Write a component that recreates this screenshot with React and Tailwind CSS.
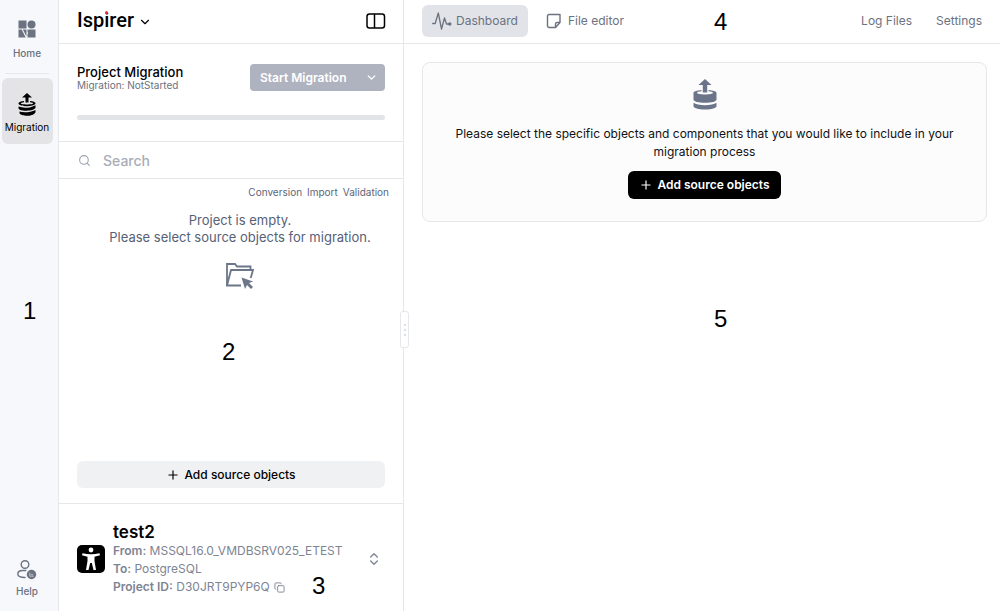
import { useState } from "react";
import { ChevronDown, ChevronsUpDown, Copy, Plus, Search } from "lucide-react";

const treeColumns = ["Conversion", "Import", "Validation"];

function HomeIcon() {
  return (
    <svg viewBox="0 0 18 18" className="w-[18px] h-[18px]" fill="currentColor" aria-hidden="true">
      <rect x="0.5" y="0.5" width="8" height="8" />
      <circle cx="13.5" cy="4.5" r="4" />
      <path d="M0.500 9.500h3.200l4 8H.500z M4.800 9.500h3.700v7z" />
      <path d="M9.500 9.500h8v8h-8v-3.200a2 2 0 0 0 0-2.600z" />
    </svg>
  );
}

function MigrationIcon({ className }) {
  return (
    <svg viewBox="0 0 24 32" className={className} fill="currentColor" aria-hidden="true">
      <path d="M12 1l6.500 6h-4.300v7.500H9.800V7H5.500z" />
      <path d="M8.500 12v1.300c-2.500.3-4.500.8-4.500 1.500 0 1.100 4 1.700 8 1.700s8-.6 8-1.700c0-.7-2-1.200-4.500-1.500V12c4.500.4 8 1.400 8 2.800v6.700c0 2-5 3.300-11.500 3.300S.500 23.500.500 21.500v-6.700C.500 13.400 4 12.400 8.500 12z" />
      <path d="M.500 24.800c2 1.500 6.300 2.400 11.500 2.400s9.500-.9 11.500-2.400V28c0 2-5 3.500-11.500 3.500S.500 30 .500 28z" />
    </svg>
  );
}

function StackIcon() {
  return (
    <svg viewBox="0 0 18 23" className="w-[18px] h-[23px]" fill="currentColor" aria-hidden="true">
      <path d="M9 0l5 4.500h-3.500v5h-3v-5H4z" />
      <path d="M6 8v1.200c-2 .2-3.200.5-3.200 1 0 .8 3 1.200 6.200 1.200s6.200-.4 6.200-1.200c0-.5-1.200-.8-3.200-1V8c3 .2 5.500 1 5.500 2.200v.6c-1 1.600-4.500 2.400-8.500 2.400S1 12.300.500 10.700v-.5C.500 9 3 8.200 6 8z" />
      <path d="M.500 13.600c5 1.900 12 1.400 17-1.400v2.600c-1 2-5 2.900-8.500 2.900-4 0-8-.6-8.500-2.500z" />
      <path d="M1.500 18.600c4 1.300 11 .9 16-1.600v2.200c-1 2.500-5 3.600-8.500 3.600-3.500 0-7-1-7.500-2.800z" />
    </svg>
  );
}

function HelpIcon() {
  return (
    <svg viewBox="0 0 20 20" className="w-5 h-5" fill="none" stroke="currentColor" strokeWidth="1.400" strokeLinecap="round" aria-hidden="true">
      <circle cx="8" cy="4.500" r="3.800" />
      <path d="M8 17.500C3.500 17.500.800 16.500.800 14s2-3.500 5-3.500h3" />
      <circle cx="14.500" cy="14.500" r="4.700" fill="currentColor" stroke="none" />
      <path d="M12.800 13v3.200h3.600M14.300 14.300l1.500.500" stroke="#f7f8fb" strokeWidth="0.600" />
    </svg>
  );
}

function PanelIcon() {
  return (
    <svg viewBox="0 0 20 16" className="w-5 h-4" fill="none" stroke="currentColor" strokeWidth="1.500" aria-hidden="true">
      <rect x="1" y="1" width="17.500" height="14" rx="2.500" />
      <path d="M8.500 1v14" />
    </svg>
  );
}

function FolderIcon() {
  return (
    <svg viewBox="0 0 28 28" className="w-7 h-7" fill="none" stroke="currentColor" strokeWidth="1.800" aria-hidden="true">
      <path d="M1 23.500V2h8l2 2.500h13.500V7.500" />
      <path d="M15 23.500H1L5 8h22l-2.300 8" />
      <path d="M15.500 15.500l11.500 4-4 1.500 4 4-2 2-4-4-2 4z" fill="currentColor" stroke="none" />
    </svg>
  );
}

function PulseIcon() {
  return (
    <svg viewBox="0 0 20 18" className="w-5 h-[18px]" fill="none" stroke="currentColor" strokeWidth="1.300" strokeLinejoin="round" strokeLinecap="round" aria-hidden="true">
      <path d="M.700 11.500h2.500L6.300 1l3.200 16 3-11 2 6h3" />
      <circle cx="17.800" cy="12" r="1.700" fill="currentColor" stroke="none" />
    </svg>
  );
}

function NoteIcon() {
  return (
    <svg viewBox="0 0 16 16" className="w-4 h-4" fill="none" stroke="currentColor" strokeWidth="1.400" strokeLinejoin="round" aria-hidden="true">
      <path d="M3 1.500h11v8L9.500 14.500H3a1.500 1.500 0 0 1-1.500-1.500V3A1.500 1.500 0 0 1 3 1.500z" />
      <path d="M14 9.500h-3A1.500 1.500 0 0 0 9.500 11v3.500" />
    </svg>
  );
}

function ProjectIcon() {
  return (
    <svg viewBox="0 0 28 28" className="w-7 h-7 shrink-0" aria-hidden="true">
      <rect width="28" height="28" rx="5" fill="#000" />
      <circle cx="14" cy="5" r="2.400" fill="#fff" />
      <path d="M5.500 8.200Q14 10.500 22.500 8.200l.5 2-5.500 1.600v4.200l1.500 9h-2.500L14.800 18h-1.600l-1.700 7H9l1.500-9v-4.200L5 10.200z" fill="#fff" />
    </svg>
  );
}

function Marker({ className, children }) {
  return (
    <span className={`absolute font-['Liberation_Sans',sans-serif] text-2xl leading-7 font-normal text-black ${className}`}>
      {children}
    </span>
  );
}

function Sidebar() {
  return (
    <nav className="relative w-[59px] shrink-0 flex flex-col items-center border-r border-[#e5e7eb] bg-[#f7f8fb] text-[10px] text-[#6b7280]">
      <a href="#home" className="flex flex-col items-center gap-2 pt-5 mr-1 font-medium">
        <HomeIcon />
        <span>Home</span>
      </a>
      <hr className="w-11 mr-1 mt-3 mb-1 border-[#e5e7eb]" />
      <a href="#migration" className="flex flex-col items-center gap-1 w-[51px] h-[66px] pt-[15px] mr-1 rounded-md bg-[#e4e4e6] text-black">
        <StackIcon />
        <span>Migration</span>
      </a>
      <a href="#help" className="flex flex-col items-center gap-1 mt-auto mb-3 mr-1 font-medium">
        <HelpIcon />
        <span>Help</span>
      </a>
      <Marker className="left-[23px] top-[297px]">1</Marker>
    </nav>
  );
}

function ProjectPanel() {
  const [query, setQuery] = useState("");

  return (
    <aside className="relative w-[345px] shrink-0 flex flex-col border-r border-[#e5e7eb]">
      <header className="h-11 flex items-center justify-between pl-[18px] pr-[17px] border-b border-[#e5e7eb]">
        <button className="flex items-center gap-1">
          <span className="font-['Roboto',sans-serif] text-xl leading-6 font-medium pb-1">
            Isp
            <span className="relative">
              i
              <span className="absolute left-px top-[3px] w-[3px] h-[3px] rounded-full bg-red-500" />
            </span>
            rer
          </span>
          <ChevronDown size={14} />
        </button>
        <button aria-label="Toggle panel" className="pb-[2px]">
          <PanelIcon />
        </button>
      </header>

      {/* Migration status */}
      <section className="h-[98px] px-[18px] pt-5 border-b border-[#e5e7eb]">
        <div className="flex items-start justify-between">
          <div>
            <h2 className="text-[13px] leading-4 font-medium">Project Migration</h2>
            <p className="text-[10px] leading-[11px] text-[#6b7280]">Migration: NotStarted</p>
          </div>
          <button className="flex items-center justify-between w-[135px] h-[27px] pl-[10px] pr-[7px] rounded bg-[#afb3bf] text-xs font-semibold text-white">
            Start Migration
            <ChevronDown size={13} strokeWidth={2.5} />
          </button>
        </div>
        <div className="mt-6 h-[5px] rounded-full bg-[#e3e4e8]" />
      </section>

      <label className="h-[37px] flex items-center gap-3 pl-[19px] pr-5 border-b border-[#e5e7eb] text-[#9ca3af]">
        <Search size={13} className="shrink-0" />
        <input
          type="text"
          placeholder="Search"
          aria-label="Search"
          value={query}
          onChange={(e) => setQuery(e.target.value)}
          className="w-full pt-[2px] outline-none text-sm font-medium placeholder:text-[#a9adb8]"
        />
      </label>

      <div className="flex justify-end gap-[5px] pt-[6px] pr-[14px] text-[10px] leading-[14px] text-[#5d6678]">
        {treeColumns.map((name) => (
          <span key={name}>{name}</span>
        ))}
      </div>
      <div className="flex-1 flex flex-col items-center pt-[13px] pl-[18px] text-center text-[13px] text-[#566176]">
        <p className="leading-[17px]">Project is empty.</p>
        <p className="leading-[17px]">Please select source objects for migration.</p>
        <div className="mt-4 text-[#6b7688]">
          <FolderIcon />
        </div>
      </div>
      <Marker className="left-[163px] top-[338px]">2</Marker>

      <button className="flex items-center justify-center gap-1 h-[27px] mx-[18px] mb-[15px] rounded-md bg-[#f0f1f3] text-xs font-medium">
        <Plus size={14} />
        Add source objects
      </button>

      {/* Current project */}
      <footer className="relative flex items-center gap-2 h-[108px] px-[18px] pt-[3px] border-t border-[#e5e7eb]">
        <ProjectIcon />
        <div className="flex-1 text-xs leading-[18px] text-[#7d8494]">
          <h3 className="text-[17px] leading-5 font-semibold text-black">test2</h3>
          <p><strong className="font-semibold">From:</strong> MSSQL16.0_VMDBSRV025_ETEST</p>
          <p><strong className="font-semibold">To:</strong> PostgreSQL</p>
          <p className="flex items-center gap-1">
            <span><strong className="font-semibold">Project ID:</strong> D30JRT9PYP6Q</span>
            <button aria-label="Copy project ID"><Copy size={11} /></button>
          </p>
        </div>
        <button aria-label="Switch project" className="mr-[3px] text-[#7d8494]">
          <ChevronsUpDown size={16} />
        </button>
        <Marker className="left-[253px] top-[68px]">3</Marker>
      </footer>

      <div className="absolute -right-[6px] top-[311px] z-10 w-[9px] h-[37px] flex flex-col items-center justify-center gap-[3px] rounded-[3px] border border-[#e5e7eb] bg-white">
        <i className="w-[2px] h-[2px] rounded-full bg-[#d1d5db]" />
        <i className="w-[2px] h-[2px] rounded-full bg-[#d1d5db]" />
        <i className="w-[2px] h-[2px] rounded-full bg-[#d1d5db]" />
      </div>
    </aside>
  );
}

function Dashboard() {
  return (
    <main className="relative flex-1 min-w-0">
      <header className="h-11 flex items-center justify-between px-[18px] pb-[2px] border-b border-[#e5e7eb] text-xs text-[#6b7280]">
        <div className="flex items-center gap-2">
          <button className="flex items-center gap-1 h-8 px-[10px] rounded-md bg-[#e1e3e8]">
            <PulseIcon />
            Dashboard
          </button>
          <button className="flex items-center gap-[6px] h-8 px-[10px]">
            <NoteIcon />
            File editor
          </button>
        </div>
        <div className="flex items-center gap-6">
          <a href="#logs">Log Files</a>
          <a href="#settings">Settings</a>
        </div>
      </header>

      <section className="flex flex-col items-center ml-[18px] mr-[13px] mt-[18px] px-8 pt-[15px] pb-[22px] rounded-lg border border-[#e5e7eb] bg-[#fcfcfd] text-center">
        <MigrationIcon className="w-6 h-8 text-[#6b7488]" />
        <p className="mt-[15px] max-w-[500px] text-xs leading-[18px] text-[#111]">
          Please select the specific objects and components that you would like to include in your migration process
        </p>
        <button className="mt-[10px] flex items-center gap-1 h-7 px-[11px] rounded-md bg-black text-xs font-semibold text-white">
          <Plus size={14} />
          Add source objects
        </button>
      </section>
      <Marker className="left-[310px] top-2">4</Marker>
      <Marker className="left-[310px] top-[305px]">5</Marker>
    </main>
  );
}

export default function App() {
  return (
    <div className="flex min-h-screen bg-white text-black font-['Inter',sans-serif]">
      <Sidebar />
      <ProjectPanel />
      <Dashboard />
    </div>
  );
}
